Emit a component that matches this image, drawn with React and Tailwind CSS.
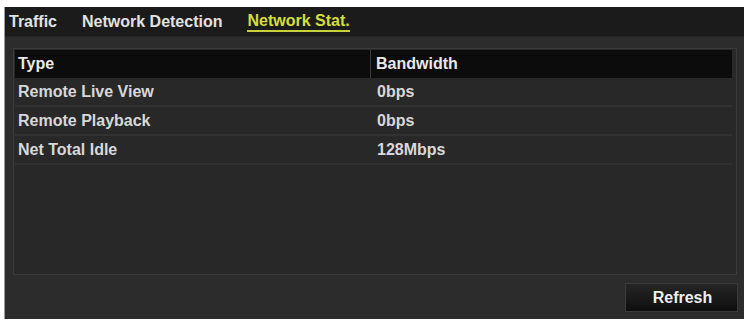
import React from "react";

const rows = [
  { type: "Remote Live View", bw: "0bps" },
  { type: "Remote Playback", bw: "0bps" },
  { type: "Net Total Idle", bw: "128Mbps" },
];

const App = () => {
  return (
    <div
      className="w-[748px] h-[320px] bg-white pl-[4px] pt-[7px] overflow-hidden"
      style={{ fontFamily: '"Liberation Sans", Arial, sans-serif' }}
    >
      <div className="w-[740px] h-[312px] bg-[#2c2c2c] border-l border-[#9a9a9a] flex flex-col">
        {/* tabs */}
        <div className="h-[30px] bg-[#1b1b1b] flex items-center pl-[4px] gap-[25px] text-[16px] font-bold text-[#e2e2e2] border-b border-[#262626]">
          <span>Traffic</span>
          <span>Network Detection</span>
          <span className="text-[#d4de3c] border-b-2 border-[#c8d23a] leading-[18px]">
            Network Stat.
          </span>
        </div>

        {/* table */}
        <div className="ml-[8px] mt-[11px] w-[724px] h-[227px] border border-[#3b3b3b] bg-[#282828] p-[1px] pr-[4px]">
          <div className="h-[28px] bg-[#0c0c0c] flex items-center text-[16px] font-bold text-[#e8e8e8]">
            <div className="w-[356px] h-full flex items-center pl-[3px] border-r border-[#3a3a3a]">
              Type
            </div>
            <div className="pl-[5px]">Bandwidth</div>
          </div>
          {rows.map((r) => (
            <div
              key={r.type}
              className="h-[29px] flex items-center text-[16px] font-bold text-[#d8d8d8] border-b-2 border-[#323232]"
            >
              <div className="w-[356px] pl-[3px]">{r.type}</div>
              <div className="pl-[6px]">{r.bw}</div>
            </div>
          ))}
        </div>

        {/* footer */}
        <div className="flex justify-end pr-[6px] pt-[8px]">
          <button className="w-[113px] h-[29px] bg-gradient-to-b from-[#262626] to-[#0e0e0e] border border-[#3a3a3a] text-[16px] font-bold text-[#eeeeee] pl-[2px]">
            Refresh
          </button>
        </div>
      </div>
    </div>
  );
};

export default App;
